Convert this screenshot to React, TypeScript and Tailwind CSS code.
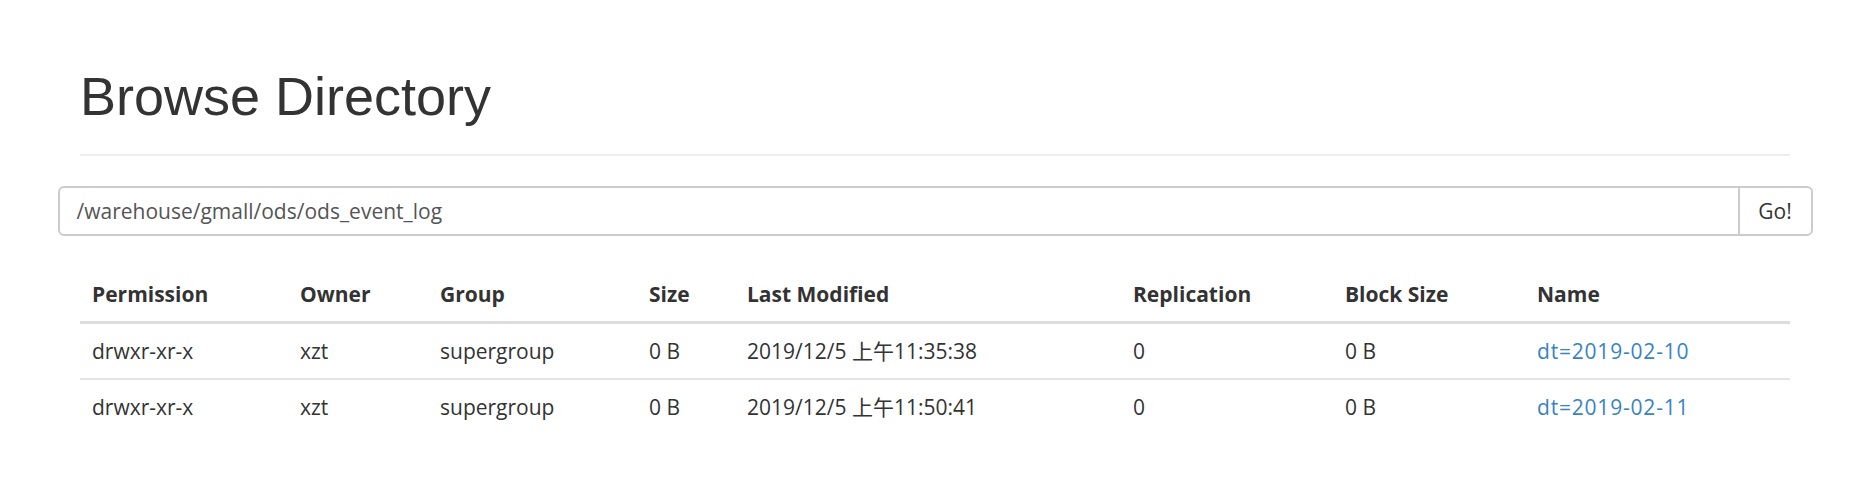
// Browse Directory page (HDFS style file browser)

interface Entry {
  permission: string;
  owner: string;
  group: string;
  size: string;
  modified: string;
  replication: string;
  blockSize: string;
  name: string;
}

const entries: Entry[] = [
  {
    permission: "drwxr-xr-x",
    owner: "xzt",
    group: "supergroup",
    size: "0 B",
    modified: "2019/12/5 上午11:35:38",
    replication: "0",
    blockSize: "0 B",
    name: "dt=2019-02-10",
  },
  {
    permission: "drwxr-xr-x",
    owner: "xzt",
    group: "supergroup",
    size: "0 B",
    modified: "2019/12/5 上午11:50:41",
    replication: "0",
    blockSize: "0 B",
    name: "dt=2019-02-11",
  },
];

const bodyFont =
  "font-['Segoe_UI','Open_Sans','Noto_Sans_CJK_SC',sans-serif]";

export default function App() {
  return (
    <div className={`min-h-[491px] w-full bg-white text-[#333] ${bodyFont}`}>
      <div className="mx-auto w-[1755px] px-[22.5px] pt-[67px]">
        {/* Page header */}
        <div className="mb-[30px] border-b-2 border-[#eeeeee] pb-[13px]">
          <h1 className="mb-[15px] font-['Liberation_Sans',Arial,sans-serif] text-[54px] leading-[59.4px] font-normal text-[#333]">
            Browse Directory
          </h1>
        </div>

        {/* Path input */}
        <div className="-mx-[22.5px] flex h-[50px] rounded-[6px] border-2 border-[#cccccc]">
          <div className="flex flex-1 items-center px-[17px] text-[21px] text-[#555]">
            /warehouse/gmall/ods/ods_event_log
          </div>
          <button className="flex w-[73px] items-center justify-center border-l-2 border-[#cccccc] text-[21px] text-[#333]">
            Go!
          </button>
        </div>

        {/* Listing */}
        <table className="mt-[31px] w-full table-fixed border-collapse text-left text-[21px] leading-[30px]">
          <thead>
            <tr className="border-b-[3px] border-[#dddddd]">
              <th className="w-[208px] p-3 font-bold">Permission</th>
              <th className="w-[140px] p-3 font-bold">Owner</th>
              <th className="w-[209px] p-3 font-bold">Group</th>
              <th className="w-[98px] p-3 font-bold">Size</th>
              <th className="w-[386px] p-3 font-bold">Last Modified</th>
              <th className="w-[212px] p-3 font-bold">Replication</th>
              <th className="w-[192px] p-3 font-bold">Block Size</th>
              <th className="w-[265px] p-3 font-bold">Name</th>
            </tr>
          </thead>
          <tbody>
            {entries.map((e, i) => (
              <tr
                key={e.name}
                className={i > 0 ? "border-t-2 border-[#e3e3e3]" : ""}
              >
                <td className="p-3">{e.permission}</td>
                <td className="p-3">{e.owner}</td>
                <td className="p-3">{e.group}</td>
                <td className="p-3">{e.size}</td>
                <td className="p-3">{e.modified}</td>
                <td className="p-3">{e.replication}</td>
                <td className="p-3">{e.blockSize}</td>
                <td className="p-3">
                  <a href="#" className="tracking-[0.8px] text-[#3883c4]">
                    {e.name}
                  </a>
                </td>
              </tr>
            ))}
          </tbody>
        </table>
      </div>
    </div>
  );
}
